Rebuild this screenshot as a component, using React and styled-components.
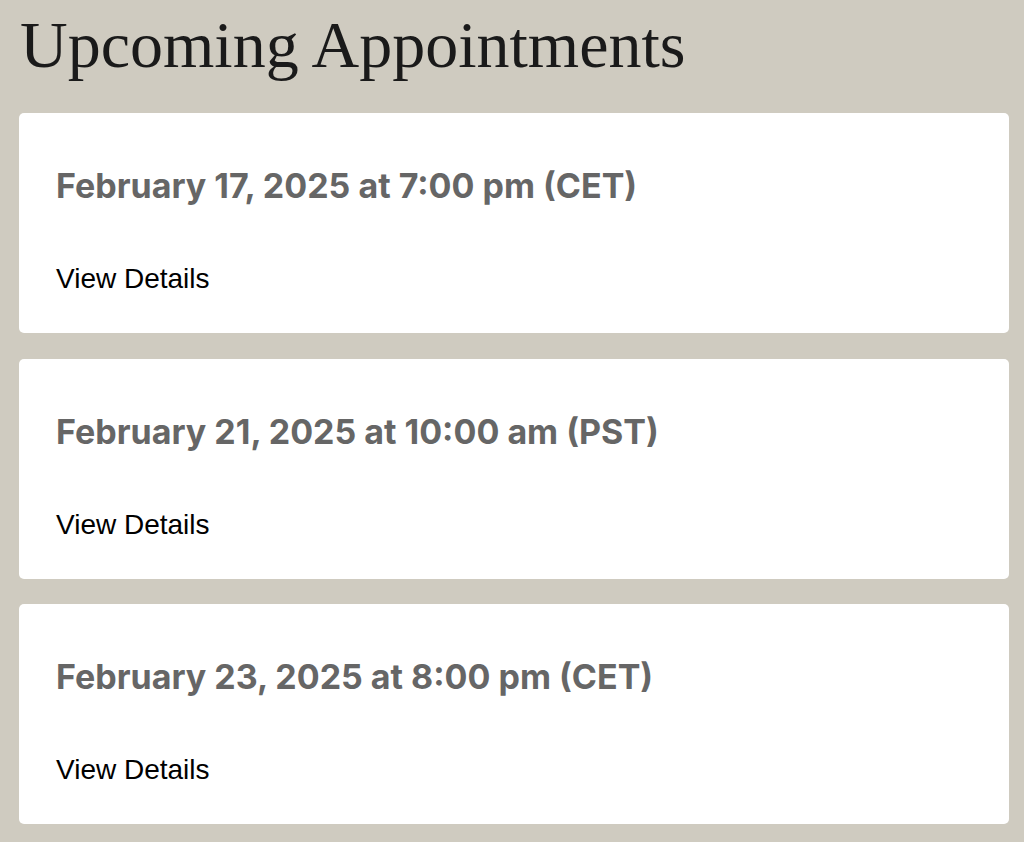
import React from "react";
import styled, { createGlobalStyle } from "styled-components";

const Global = createGlobalStyle`
  html, body { margin: 0; padding: 0; background: #cfcbc0; }
  body { font-family: "Liberation Sans", Arial, sans-serif; }
`;

const Page = styled.main`
  padding: 0 15px 17px 19px;
  display: flex;
  flex-direction: column;
`;

const Title = styled.h1`
  font-family: "Liberation Serif", "Times New Roman", serif;
  font-weight: 400;
  font-size: 66px;
  line-height: 66px;
  color: #1a1a1a;
  margin: 0;
  padding: 12px 0 35px 1px;
`;

const List = styled.div`
  display: flex;
  flex-direction: column;
  gap: 25.5px;
`;

const Card = styled.article`
  background: #ffffff;
  border-radius: 5px;
  padding: 52px 37px 38px;
  height: 220px;
  box-sizing: border-box;
  display: flex;
  flex-direction: column;
`;

const When = styled.h2`
  font-family: Inter, "Noto Sans", sans-serif;
  font-weight: 700;
  font-size: 34px;
  line-height: 41px;
  color: #666666;
  margin: 0;
`;

const Details = styled.a`
  margin-top: auto;
  font-family: "Liberation Sans", Arial, sans-serif;
  font-size: 28px;
  line-height: 32px;
  color: #000;
  text-decoration: none;
  align-self: flex-start;
`;

const appointments = [
  "February 17, 2025 at 7:00 pm (CET)",
  "February 21, 2025 at 10:00 am (PST)",
  "February 23, 2025 at 8:00 pm (CET)",
];

export default function App() {
  return (
    <>
      <Global />
      <Page>
        <Title>Upcoming Appointments</Title>
        <List>
          {appointments.map((a) => (
            <Card key={a}>
              <When>{a}</When>
              <Details href="#">View Details</Details>
            </Card>
          ))}
        </List>
      </Page>
    </>
  );
}
